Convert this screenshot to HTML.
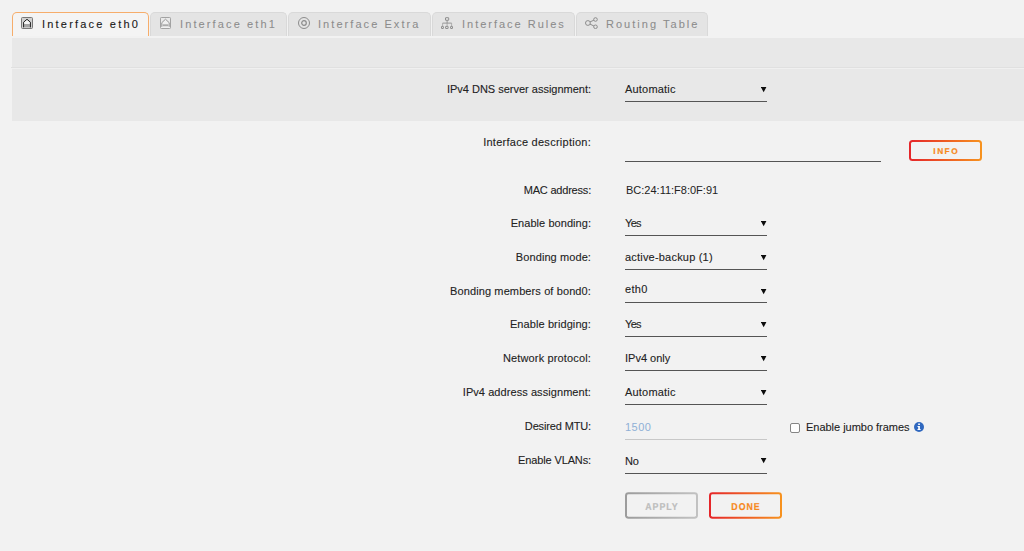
<!DOCTYPE html>
<html>
<head>
<meta charset="utf-8">
<title>Interface eth0</title>
<style>
html,body{margin:0;padding:0;}
body{width:1024px;height:551px;overflow:hidden;background:#f2f2f2;font-family:"Liberation Sans",sans-serif;font-size:11px;color:#222;position:relative;}
.abs{position:absolute;}
/* tabs */
.tab{-webkit-text-stroke:0.07px currentColor;position:absolute;top:12px;height:24px;box-sizing:border-box;border:1px solid #d9d9d9;border-bottom:none;border-radius:5px 5px 0 0;background:#e4e4e4;color:#8c8c8c;font-size:11px;letter-spacing:2.2px;white-space:nowrap;}
.tab.active{background:#f4f4f4;border-color:#f6ad6b;color:#1a1a1a;-webkit-text-stroke:0.12px #1a1a1a;}
.tab svg{position:absolute;left:8px;top:4px;width:12px;height:12px;}
.tab span{position:absolute;left:29px;top:5px;line-height:13px;}
/* panel */
#panel{left:12px;top:38px;width:1012px;height:83px;background:#e8e8e8;}
#divider{left:11px;top:67px;width:1013px;height:1px;background:#e0e0e0;}
#divider2{left:12px;top:68px;width:1012px;height:1px;background:#f0f0f0;}
/* rows */
.lbl{-webkit-text-stroke:0.1px #222;position:absolute;right:433px;white-space:nowrap;line-height:13px;font-size:11px;color:#222;}
.val{-webkit-text-stroke:0.1px #222;position:absolute;left:625px;white-space:nowrap;line-height:13px;font-size:11px;color:#222;}
.ul{position:absolute;left:625px;width:142px;height:1px;background:#555;}
.arr{position:absolute;left:761px;width:6px;height:6px;}
/* buttons */
.btn{-webkit-text-stroke:0.2px currentColor;position:absolute;box-sizing:border-box;border-radius:3px;font-weight:bold;text-align:center;white-space:nowrap;}
.btn u{position:absolute;left:0;top:0;right:0;bottom:0;border-radius:3.5px;text-decoration:none;}
.btn i{position:absolute;left:2px;top:2px;right:2px;bottom:2px;background:#f2f2f2;border-radius:1.5px;}
.btn b{position:absolute;left:0;right:0;text-align:center;}
</style>
</head>
<body>

<!-- tabs -->
<div class="tab active" style="left:12px;width:137px;">
  <svg viewBox="0 0 12 12"><rect x="0.5" y="0.5" width="11" height="11" rx="1" fill="#d0d0d0" stroke="#777" stroke-width="1"/><path d="M2.6 10.4V5.2L6 2.3L9.4 5.2V10.4Z" fill="#f6f6f6" stroke="none"/><rect x="3.1" y="7" width="5.8" height="3.4" fill="#a4a4a4"/><path d="M2.6 10.4V5.2L6 2.3L9.4 5.2V10.4" fill="none" stroke="#1c1c1c" stroke-width="1"/></svg>
  <span>Interface eth0</span>
</div>
<div class="tab" style="left:150px;width:137px;letter-spacing:2.12px;">
  <svg viewBox="0 0 12 12" style="left:9px;"><rect x="0.5" y="0.5" width="10" height="11" rx="0.8" fill="#e9e9e9" stroke="#a2a2a2" stroke-width="1"/><path d="M1.8 10V5.7L5.5 2.2L9.2 5.7V10" fill="#efefef" stroke="#979797" stroke-width="1"/><rect x="2.6" y="7.3" width="5.8" height="2" fill="#ababab"/><rect x="1.2" y="9.8" width="8.6" height="0.8" fill="#f6f6f6"/></svg>
  <span>Interface eth1</span>
</div>
<div class="tab" style="left:288px;width:143px;letter-spacing:2.06px;">
  <svg viewBox="0 0 12 12" style="left:9px;"><circle cx="6" cy="6" r="5.5" fill="none" stroke="#8c8c8c" stroke-width="1"/><circle cx="6" cy="6" r="2.3" fill="none" stroke="#8c8c8c" stroke-width="1.2"/></svg>
  <span>Interface Extra</span>
</div>
<div class="tab" style="left:432px;width:143px;letter-spacing:1.99px;">
  <svg viewBox="0 0 12 12"><g fill="none" stroke="#8e8e8e" stroke-width="1"><rect x="4.5" y="0.7" width="3.2" height="2.6" rx="0.3"/><path d="M6.1 3.5V6M1.6 6.1H10.6" stroke-width="0.9"/><path d="M1.6 9V6.1M10.6 6.1V9M6.1 6V9" stroke-width="0.6"/><rect x="0.5" y="9.4" width="1.9" height="2.1" rx="0.2"/><rect x="4.6" y="9.4" width="2.5" height="2.1" rx="0.2"/><rect x="9.6" y="9.4" width="1.9" height="2.1" rx="0.2"/></g></svg>
  <span>Interface Rules</span>
</div>
<div class="tab" style="left:576px;width:132px;letter-spacing:2.03px;">
  <svg viewBox="0 0 13 12" style="width:13px;"><g fill="none" stroke="#8c8c8c" stroke-width="1"><circle cx="2.9" cy="6" r="2.4"/><circle cx="10.5" cy="2.5" r="1.8"/><circle cx="10.5" cy="9.8" r="1.8"/><path d="M5 4.9L8.9 3.2M5 7.1L8.9 9"/></g></svg>
  <span>Routing Table</span>
</div>

<!-- grey panel -->
<div id="panel" class="abs"></div>
<div id="divider" class="abs"></div>
<div id="divider2" class="abs"></div>

<!-- row: DNS -->
<div class="lbl" style="top:83px;letter-spacing:-0.010px;">IPv4 DNS server assignment:</div>
<div class="val" style="top:83px;letter-spacing:0.20px;">Automatic</div>
<svg class="arr" style="top:87px;" viewBox="0 0 6 6"><path d="M-0.1 0H5.4L2.65 5.3Z" fill="#0c0c0c"/></svg>
<div class="ul" style="top:101px;"></div>

<!-- row: description -->
<div class="lbl" style="top:136px;letter-spacing:0.260px;">Interface description:</div>
<div class="ul" style="top:161px;width:256px;"></div>
<div class="btn" style="left:909px;top:140px;width:73px;height:21px;font-size:8.3px;letter-spacing:1.5px;color:#f6881c;"><u style="background:linear-gradient(90deg,#e5252a 0%,#f7931e 100%);"><i></i></u><b style="top:7px;line-height:9px;text-indent:1.5px;transform:rotate(0.05deg) scaleX(1);">INFO</b></div>

<!-- row: MAC -->
<div class="lbl" style="top:184px;letter-spacing:-0.200px;">MAC address:</div>
<div class="val" style="top:184px;left:626px;-webkit-text-stroke:0;">BC:24:11:F8:0F:91</div>

<!-- row: bonding -->
<div class="lbl" style="top:217px;letter-spacing:0.050px;">Enable bonding:</div>
<div class="val" style="top:217px;letter-spacing:-0.70px;">Yes</div>
<svg class="arr" style="top:221px;" viewBox="0 0 6 6"><path d="M-0.1 0H5.4L2.65 5.3Z" fill="#0c0c0c"/></svg>
<div class="ul" style="top:235px;"></div>

<div class="lbl" style="top:251px;letter-spacing:0.090px;">Bonding mode:</div>
<div class="val" style="top:251px;letter-spacing:0.20px;">active-backup (1)</div>
<svg class="arr" style="top:255px;" viewBox="0 0 6 6"><path d="M-0.1 0H5.4L2.65 5.3Z" fill="#0c0c0c"/></svg>
<div class="ul" style="top:269px;"></div>

<div class="lbl" style="top:285px;letter-spacing:0.110px;">Bonding members of bond0:</div>
<div class="val" style="top:283px;letter-spacing:0.28px;">eth0</div>
<svg class="arr" style="top:289px;" viewBox="0 0 6 6"><path d="M-0.1 0H5.4L2.65 5.3Z" fill="#0c0c0c"/></svg>
<div class="ul" style="top:302px;"></div>

<div class="lbl" style="top:318px;letter-spacing:0.100px;">Enable bridging:</div>
<div class="val" style="top:318px;letter-spacing:-0.70px;">Yes</div>
<svg class="arr" style="top:322px;" viewBox="0 0 6 6"><path d="M-0.1 0H5.4L2.65 5.3Z" fill="#0c0c0c"/></svg>
<div class="ul" style="top:336px;"></div>

<div class="lbl" style="top:352px;letter-spacing:0.145px;">Network protocol:</div>
<div class="val" style="top:352px;letter-spacing:0.00px;">IPv4 only</div>
<svg class="arr" style="top:356px;" viewBox="0 0 6 6"><path d="M-0.1 0H5.4L2.65 5.3Z" fill="#0c0c0c"/></svg>
<div class="ul" style="top:370px;"></div>

<div class="lbl" style="top:386px;letter-spacing:0.070px;">IPv4 address assignment:</div>
<div class="val" style="top:386px;letter-spacing:0.20px;">Automatic</div>
<svg class="arr" style="top:390px;" viewBox="0 0 6 6"><path d="M-0.1 0H5.4L2.65 5.3Z" fill="#0c0c0c"/></svg>
<div class="ul" style="top:404px;"></div>

<div class="lbl" style="top:420px;letter-spacing:-0.140px;">Desired MTU:</div>
<div class="val" style="top:421px;left:625px;color:#8fb0d6;letter-spacing:0.5px;-webkit-text-stroke:0;">1500</div>
<div class="ul" style="top:439px;background:#c8c8c8;"></div>
<div class="abs" style="left:790px;top:423px;width:10px;height:10px;box-sizing:border-box;border:1px solid #858585;border-radius:2px;background:#fff;"></div>
<div class="abs" style="left:806px;top:421px;line-height:13px;white-space:nowrap;letter-spacing:-0.02px;-webkit-text-stroke:0.1px #222;">Enable jumbo frames</div>
<svg class="abs" style="left:914px;top:422px;width:10px;height:10px;" viewBox="0 0 10 10"><circle cx="5" cy="5" r="5" fill="#3068bf"/><path d="M4.2 1.4H5.9V3H4.2ZM3.5 3.9H5.9V7.1H6.6V8.1H3.5V7.1H4.2V4.9H3.5Z" fill="#fff"/></svg>

<div class="lbl" style="top:454px;letter-spacing:-0.120px;">Enable VLANs:</div>
<div class="val" style="top:455px;letter-spacing:-0.30px;">No</div>
<svg class="arr" style="top:458px;" viewBox="0 0 6 6"><path d="M-0.1 0H5.4L2.65 5.3Z" fill="#0c0c0c"/></svg>
<div class="ul" style="top:473px;"></div>

<!-- buttons -->
<div class="btn" style="left:625px;top:492px;width:73px;height:27px;font-size:10px;letter-spacing:1.1px;color:#bdbdbd;"><u style="background:linear-gradient(90deg,#9c9c9c 0%,#c2c2c2 100%);transform:translateY(0.05px) scaleY(0.982);"><i></i></u><b style="top:9px;line-height:12px;text-indent:1.1px;transform:rotate(0.05deg) scaleX(0.88);">APPLY</b></div>
<div class="btn" style="left:709px;top:492px;width:73px;height:27px;font-size:10px;letter-spacing:1.1px;color:#f6881c;"><u style="background:linear-gradient(90deg,#e5252a 0%,#f7931e 100%);transform:translateY(0.05px) scaleY(0.982);"><i></i></u><b style="top:9px;line-height:12px;text-indent:1.1px;transform:rotate(0.05deg) scaleX(0.88);">DONE</b></div>

</body>
</html>
